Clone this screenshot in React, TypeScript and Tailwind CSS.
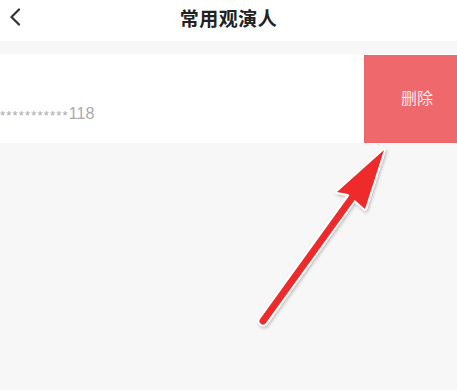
import React from "react";

export default function App() {
  return (
    <div
      className="w-[457px] h-[390px] bg-[#f7f7f7] overflow-hidden flex flex-col"
      style={{ fontFamily: '"Noto Sans CJK SC", "Noto Sans", sans-serif' }}
    >
      {/* header */}
      <div className="relative h-[41px] bg-white flex items-center justify-center shrink-0">
        <svg
          className="absolute left-[8px] top-[8px]"
          width="14"
          height="18"
          viewBox="0 0 14 18"
          fill="none"
        >
          <path d="M11 1.5 L3.5 9 L11 16.5" stroke="#333" strokeWidth="2.2" strokeLinecap="round" strokeLinejoin="round" />
        </svg>
        <span className="text-[19px] font-semibold text-[#222] leading-none -mt-[7px] tracking-[0.5px]">常用观演人</span>
      </div>

      {/* swiped row */}
      <div className="mt-[13px] h-[89px] bg-white flex shrink-0">
        <div className="flex-1 flex items-center pt-[30px]">
          <span
            className="text-[16px] text-[#aaa] leading-none"
            style={{ fontFamily: '"Liberation Sans", sans-serif' }}
          >
            <span className="relative top-[1px] text-[13px] tracking-[1.2px]">***********</span>118
          </span>
        </div>
        <div className="w-[93px] mt-[1px] bg-[#ee686c] flex items-center pl-[37px] pb-[4px]">
          <span className="text-[16px] text-[#fdeeee] leading-none whitespace-nowrap">删除</span>
        </div>
      </div>

      {/* annotation arrow */}
      <div className="relative flex-1">
        <svg className="absolute left-0 top-[-143px]" width="457" height="390" viewBox="0 0 457 390">
          <defs>
            <filter id="sh" x="-20%" y="-20%" width="140%" height="140%">
              <feDropShadow dx="1" dy="1.5" stdDeviation="1.5" floodColor="#000" floodOpacity="0.25" />
            </filter>
          </defs>
          <g filter="url(#sh)">
            <line x1="263" y1="321" x2="352" y2="197" stroke="#fff" strokeWidth="11" strokeLinecap="round" />
            <path d="M384 150 L337 192 L348 194 L365 209 Z" fill="#fff" stroke="#fff" strokeWidth="4" strokeLinejoin="round" />
            <line x1="263" y1="321" x2="354" y2="195" stroke="#ee2a2a" strokeWidth="7" strokeLinecap="round" />
            <path d="M384 150 L337 192 L348 194 L365 209 Z" fill="#ee2a2a" />
          </g>
        </svg>
      </div>
    </div>
  );
}
